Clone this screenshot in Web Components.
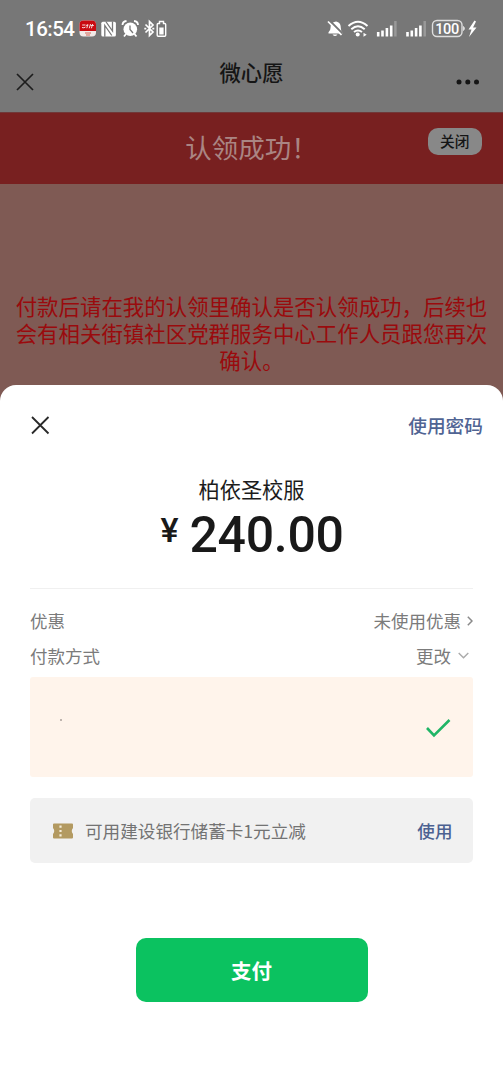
<!DOCTYPE html>
<html lang="zh-CN">
<head>
<meta charset="utf-8">
<title>微心愿</title>
<style>
html,body{margin:0;height:100%;background:#fff}
body{font-family:"Noto Sans CJK SC",sans-serif;overflow:hidden}
</style>
</head>
<body>
<pay-page></pay-page>
<script>
const define = (name, markup) => {
  const template = document.createElement('template');
  template.innerHTML = markup;
  customElements.define(name, class extends HTMLElement {
    constructor() {
      super();
      this.attachShadow({mode: 'open'}).append(template.content.cloneNode(true));
    }
  });
};

define('status-bar', `
<style>
:host{display:flex;box-sizing:border-box;height:58px;align-items:center;padding:0 25px;color:#fff}
.time{font:500 20.5px/24px Roboto,sans-serif;width:51px;letter-spacing:-.5px;white-space:nowrap}
svg{display:block;flex:none}
.left{margin-left:3px}
.right{margin-left:auto}
</style>
<span class="time">16:54</span>
<svg class="left" width="90" height="20" viewBox="79 19 90 20">
  <rect x="79.500" y="20.500" width="16.500" height="16" rx="4" fill="#f2e9e7"/>
  <path d="M79.500 31V24.500a4 4 0 0 1 4-4h8.500a4 4 0 0 1 4 4V31z" fill="#c90a10"/>
  <path d="M82.200 25h3.300M82 27.500q2 .8 3.500-.5M86 25.300h2.300M87.800 24.200l-1 4M90.500 24l-1.300 4.300M90.500 25.500h3.300M92.600 24l-1.200 4.300" stroke="#f6dcdc" stroke-width="1" fill="none"/>
  <path d="M85 33h6M86 35h4" stroke="#dc9188" stroke-width="1.500"/>
  <rect x="101.300" y="21.800" width="14.600" height="14.700" rx="1.500" fill="#fff"/>
  <path d="M104.800 36.800V25.500l7 10M105.800 21.500l6.700 9.500V21.500" stroke="#777" stroke-width="1.300" fill="none"/>
  <circle cx="130.300" cy="29.200" r="6.800" fill="#fff"/>
  <path d="M122.500 25q0-3.500 4-4M138 25q0-3.500-4-4M126 34l-2 2.500M134.500 34l2 2.500" stroke="#fff" stroke-width="1.800" fill="none"/>
  <path d="M130 25.500v4l3 3.500" stroke="#777" stroke-width="1.300" fill="none"/>
  <path d="M145.500 24.500l7.500 7.500-3.500 3.500V21.500l3.500 3.500-7.500 7.500M144.300 28.600h2M152.300 28.600h2" stroke="#fff" stroke-width="1.700" fill="none"/>
  <path d="M159.500 21.500h4v2h1.200q1 0 1 1v10.700q0 1-1 1h-6.500q-1 0-1-1V24.500q0-1 1-1h1.300z" fill="none" stroke="#fff" stroke-width="1.400"/>
  <rect x="159.300" y="27.500" width="4.300" height="7" fill="#fff"/>
</svg>
<svg class="right" width="152" height="20" viewBox="327 19 152 20">
  <path d="M329.500 33.500v-1.300q2-1.600 2-4.200 0-5.500 4.500-6.300 1.500-.7 2.500.3 3.300 1 3.300 5.800 0 3.500 1.700 4.500v1.200zM333.500 34.500h5q-2.500 3-5 0" fill="#fff"/>
  <path d="M330.500 20.500l13 13" stroke="#777" stroke-width="2"/><path d="M329 21.500l13.500 13.500" stroke="#fff" stroke-width="1.700"/>
  <path d="M349.500 26q9.500-8.500 19 0M352.300 29.200q6.700-5.800 13.400 0M355 32q4-3 8 0" fill="none" stroke="#fff" stroke-width="2"/>
  <circle cx="358.700" cy="34.600" r="2" fill="#fff"/><path d="M364.500 32.700l3.200 2-3.200 2z" fill="#fff"/>
  <path d="M379.200 32v4.500M383.500 30.500v6M387.900 28v8.500M392.200 25.500v11M408.500 32v4.500M412.800 30.500v6M417.100 28v8.500M421.400 25.500v11" stroke="#fff" stroke-width="2.600"/>
  <path d="M396.400 21v15.500M425.700 21v15.500" stroke="#999" stroke-width="2.500"/>
  <rect x="433.500" y="20.500" width="29.500" height="16" rx="4.500" fill="none" stroke="#dedede" stroke-width="1.400"/>
  <path d="M464.500 26.500q2 2 0 4z" fill="#ddd" stroke="#ddd"/>
  <text x="448.200" y="33.800" text-anchor="middle" textLength="24" font-family="Roboto,sans-serif" font-size="14.500" font-weight="500" fill="#fff">100</text>
  <path d="M475.500 20.500l-6 9h3l-2.500 7.500 7.500-9.500h-3.500l3-6z" fill="#fff"/>
</svg>`);

define('nav-bar', `
<style>
:host{display:grid;grid-template-columns:60px 1fr 60px;height:54px;color:#151515}
svg{display:block}
.close{margin:15px 0 0 16px}
.more{margin:20px 0 0 12px}
h1{margin:0;text-align:center;font-size:21.300px;line-height:28px;font-weight:500}
</style>
<svg class="close" width="18" height="18" viewBox="0 0 18 18"><path d="M1 1l16 16M17 1L1 17" stroke="#1d1d1d" stroke-width="1.700"/></svg>
<h1><slot></slot></h1>
<svg class="more" width="26" height="8" viewBox="0 0 26 8" fill="#151515"><circle cx="4" cy="4" r="2.500"/><circle cx="12.800" cy="4" r="2.500"/><circle cx="21.500" cy="4" r="2.500"/></svg>`);

define('success-banner', `
<style>
:host{display:grid;grid-template-columns:75px 1fr 75px;height:72px;background:#782020;border-top:1px solid #703838;box-sizing:border-box}
h2{margin:15px 0 0;font-size:26.500px;line-height:38px;font-weight:400;color:#aa8583;text-align:center}
button{width:53.500px;height:27px;margin:15px 0 0;padding:0;border:0;border-radius:10px;background:#888;color:#151515;font:500 14.700px/25px "Noto Sans CJK SC",sans-serif}
button span{position:relative;top:-1px}
</style>
<span></span><h2><slot></slot></h2><button><span>关闭</span></button>`);

define('claim-notice', `
<style>
:host{display:block;padding:111px 0 0;height:90px;color:#9a0a0d;text-align:center;font-family:"Liberation Sans","Noto Sans CJK SC",sans-serif;font-size:21.450px;line-height:27px;white-space:nowrap}
</style><slot></slot>`);

define('info-row', `
<style>
:host{display:flex;justify-content:space-between;align-items:center;height:34.500px;color:#7b7b7b;font-size:17.500px;line-height:26px}
span{display:flex;align-items:center}
</style><slot name="label"></slot><span><slot></slot></span>`);

define('method-card', `
<style>
:host{display:flex;align-items:center;justify-content:space-between;box-sizing:border-box;height:100px;padding:0 21px 0 30px;background:#fff4eb;border-radius:3px}
i{width:2px;height:2px;background:#aaa19b;margin-bottom:14px;border-radius:1px}
svg{display:block;margin-top:2px}
</style><i></i><svg width="28" height="22" viewBox="0 0 28 22"><path d="M3 11l7 7.500L25.500 3" fill="none" stroke="#20b566" stroke-width="2.600"/></svg>`);

define('coupon-card', `
<style>
:host{display:flex;align-items:center;box-sizing:border-box;height:65px;padding:0 20.500px 0 23px;background:#f1f1f1;border-radius:5px;color:#737373;font-size:17.600px;line-height:26px}
svg{flex:none;margin-right:12px}
a{margin-left:auto;color:#4c6191;font-weight:500}
</style>
<svg width="20" height="16" viewBox="0 0 20 16"><path d="M1 .5h18q1 0 1 1V5q-2.500 3 0 6v3.500q0 1-1 1H1q-1 0-1-1V11q2.500-3 0-6V1.500Q0 .5 1 .5z" fill="#b39a61"/><path d="M7.500 2.500v11" stroke="#f5edda" stroke-width="2.200" stroke-dasharray="2.200 2.200"/></svg>
<slot></slot><a>使用</a>`);

define('pay-button', `
<style>
:host{display:block;width:232px;height:64px;margin:0 auto}
button{width:100%;height:100%;padding:0;border:0;border-radius:10px;background:#0bc260;color:#fff;font:700 20.500px/62px "Noto Sans CJK SC",sans-serif}
</style><button><slot></slot></button>`);

define('pay-sheet', `
<style>
:host{display:block;box-sizing:border-box;height:700px;background:#fff;border-radius:16px 16px 0 0;padding:24px 30px 0}
header{display:flex;justify-content:space-between;height:31px;align-items:center;margin-right:-10px}
header a{font-size:18.700px;line-height:28px;color:#506493;font-weight:500}
.item{margin:33px 0 0;text-align:center;font-size:21.200px;line-height:32px;color:#1c1c1c}
.amount{display:flex;justify-content:center;align-items:flex-start;height:83px;color:#191919;font-family:Roboto,"Noto Sans CJK SC",sans-serif;font-weight:500}
.yen{font-size:34px;line-height:34px;margin:8px 11px 0 1px}
.num{font-size:50px;line-height:54px;letter-spacing:-.300px;margin-top:3px}
hr{height:1px;border:0;margin:0 0 15px;background:#f0f0f0}
method-card{margin-top:4px}
coupon-card{margin-top:21px}
pay-button{margin-top:75px}
svg{display:block}
.r{margin-left:6px}.d{margin:0 4px 0 7px}
</style>
<header>
  <svg width="20" height="20" viewBox="0 0 20 20"><path d="M2 2l16.500 16.500M18.500 2L2 18.500" stroke="#292929" stroke-width="1.800"/></svg>
  <a>使用密码</a>
</header>
<div class="item">柏依圣校服</div>
<div class="amount"><span class="yen">¥</span><span class="num">240.00</span></div>
<hr>
<info-row><span slot="label">优惠</span>未使用优惠<svg class="r" width="6" height="10" viewBox="0 0 6 10"><path d="M.8 .8l4.200 4.200L.8 9.200" fill="none" stroke="#8a8a8a" stroke-width="1.500"/></svg></info-row>
<info-row><span slot="label">付款方式</span>更改<svg class="d" width="11" height="7" viewBox="0 0 11 7"><path d="M.7 1l4.800 4.800L10.300 1" fill="none" stroke="#aaa" stroke-width="1.400"/></svg></info-row>
<method-card></method-card>
<coupon-card>可用建设银行储蓄卡1元立减</coupon-card>
<pay-button>支付</pay-button>`);

define('pay-page', `
<style>
:host{display:block;width:503px;height:1085px;overflow:hidden;background:linear-gradient(#777 112px,#7f5a54 112px)}
</style>
<status-bar></status-bar>
<nav-bar>微心愿</nav-bar>
<success-banner>认领成功！</success-banner>
<claim-notice>付款后请在我的认领里确认是否认领成功，后续也<br>会有相关街镇社区党群服务中心工作人员跟您再次<br>确认。</claim-notice>
<pay-sheet></pay-sheet>`);
</script>
</body>
</html>
